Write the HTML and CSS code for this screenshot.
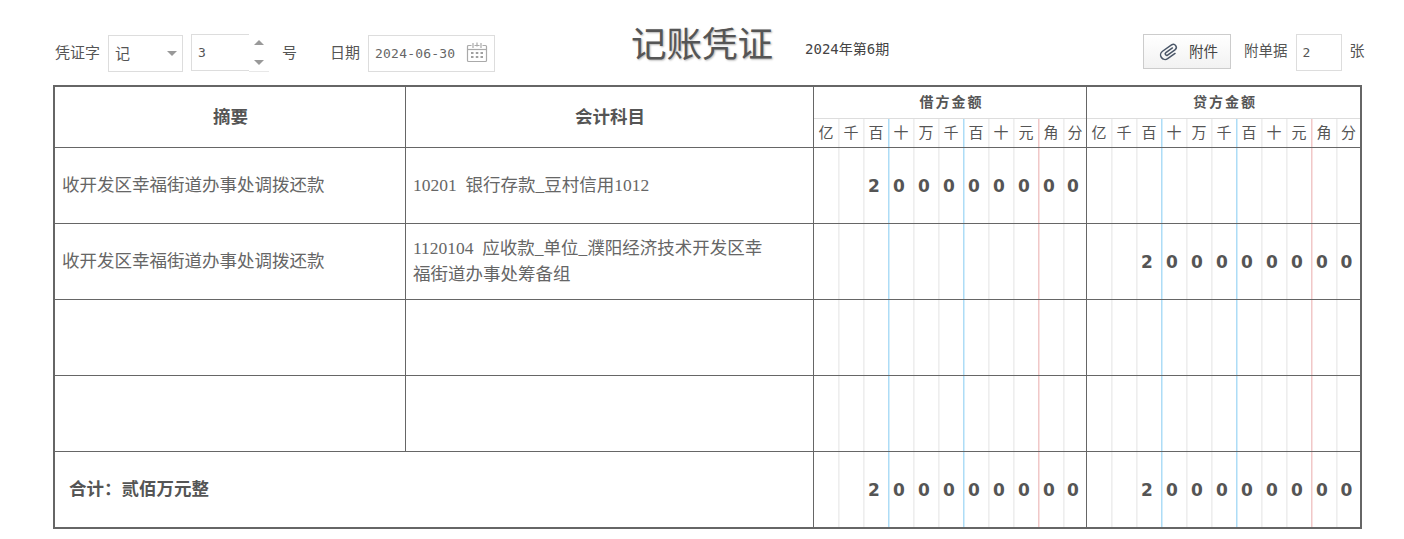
FILE: index.html
```html
<!DOCTYPE html>
<html lang="zh-CN">
<head>
<meta charset="utf-8">
<title>记账凭证</title>
<link rel="stylesheet" href="styles.css">
</head>
<body>
<header class="toolbar">
  <div class="group">
    <span class="lbl">凭证字</span>
    <div class="box select"><span>记</span><i class="caret"></i></div>
    <div class="box number"><span>3</span>
      <div class="spin"><i class="up"></i><i class="down"></i></div>
    </div>
    <span class="lbl hao">号</span>
    <span class="lbl date-lbl">日期</span>
    <div class="box date"><span>2024-06-30</span>
      <svg class="cal" width="22" height="22" viewBox="0 0 22 22" fill="none" stroke="#aaa" stroke-width="1.200">
        <path d="M5.500 4.500H2.500a1 1 0 0 0-1 1V19.500a1 1 0 0 0 1 1h17a1 1 0 0 0 1-1V5.500a1 1 0 0 0-1-1H16.500M8.500 4.500h5"/>
        <path d="M7 2v5M15 2v5M11 1.500v4"/>
        <path d="M1.500 8.500h19"/>
        <path fill="#a0a0a0" stroke="none" d="M5 11h2.500v2H5zM9.800 11h2.500v2H9.800zM14.500 11H17v2h-2.500zM5 15h2.500v2H5zM9.800 15h2.500v2H9.800zM14.500 15H17v2h-2.500z"/>
      </svg>
    </div>
  </div>
  <h1 class="title">记账凭证</h1>
  <span class="period">2024年第6期</span>
  <div class="group right">
    <button class="attach" type="button">
      <svg width="22" height="19" viewBox="0 0 22 19" fill="none" stroke="#4a5668" stroke-width="1.500" stroke-linecap="round">
        <path transform="translate(0 2) rotate(-35 11 7.500)" d="M14 12H5A4.500 4.500 0 0 1 5 3H16A3 3 0 0 1 16 9H7A1.500 1.500 0 0 1 7 6H15"/>
      </svg>
      <span class="attach-text">附件</span>
    </button>
    <span class="lbl att-lbl">附单据</span>
    <div class="box count"><span>2</span></div>
    <span class="lbl zhang">张</span>
  </div>
</header>

<main class="voucher">
  <div class="row head">
    <div class="cell th">摘要</div>
    <div class="cell th">会计科目</div>
    <div class="cell amount-head">
      <div class="amount-title">借方金额</div>
      <div class="digits units"><span>亿</span><span>千</span><span>百</span><span>十</span><span>万</span><span>千</span><span>百</span><span>十</span><span>元</span><span>角</span><span>分</span></div>
    </div>
    <div class="cell amount-head">
      <div class="amount-title">贷方金额</div>
      <div class="digits units"><span>亿</span><span>千</span><span>百</span><span>十</span><span>万</span><span>千</span><span>百</span><span>十</span><span>元</span><span>角</span><span>分</span></div>
    </div>
  </div>

  <div class="row">
    <div class="cell text">收开发区幸福街道办事处调拨还款</div>
    <div class="cell text">10201&nbsp;&nbsp;银行存款_豆村信用1012</div>
    <div class="cell"><div class="digits vals"><span></span><span></span><span>2</span><span>0</span><span>0</span><span>0</span><span>0</span><span>0</span><span>0</span><span>0</span><span>0</span></div></div>
    <div class="cell"><div class="digits vals"><span></span><span></span><span></span><span></span><span></span><span></span><span></span><span></span><span></span><span></span><span></span></div></div>
  </div>

  <div class="row">
    <div class="cell text">收开发区幸福街道办事处调拨还款</div>
    <div class="cell text">1120104&nbsp;&nbsp;应收款_单位_濮阳经济技术开发区幸福街道办事处筹备组</div>
    <div class="cell"><div class="digits vals"><span></span><span></span><span></span><span></span><span></span><span></span><span></span><span></span><span></span><span></span><span></span></div></div>
    <div class="cell"><div class="digits vals"><span></span><span></span><span>2</span><span>0</span><span>0</span><span>0</span><span>0</span><span>0</span><span>0</span><span>0</span><span>0</span></div></div>
  </div>

  <div class="row">
    <div class="cell text"></div>
    <div class="cell text"></div>
    <div class="cell"><div class="digits vals"><span></span><span></span><span></span><span></span><span></span><span></span><span></span><span></span><span></span><span></span><span></span></div></div>
    <div class="cell"><div class="digits vals"><span></span><span></span><span></span><span></span><span></span><span></span><span></span><span></span><span></span><span></span><span></span></div></div>
  </div>

  <div class="row">
    <div class="cell text"></div>
    <div class="cell text"></div>
    <div class="cell"><div class="digits vals"><span></span><span></span><span></span><span></span><span></span><span></span><span></span><span></span><span></span><span></span><span></span></div></div>
    <div class="cell"><div class="digits vals"><span></span><span></span><span></span><span></span><span></span><span></span><span></span><span></span><span></span><span></span><span></span></div></div>
  </div>

  <div class="row total">
    <div class="cell sum">合计：贰佰万元整</div>
    <div class="cell"><div class="digits vals"><span></span><span></span><span>2</span><span>0</span><span>0</span><span>0</span><span>0</span><span>0</span><span>0</span><span>0</span><span>0</span></div></div>
    <div class="cell"><div class="digits vals"><span></span><span></span><span>2</span><span>0</span><span>0</span><span>0</span><span>0</span><span>0</span><span>0</span><span>0</span><span>0</span></div></div>
  </div>
</main>
</body>
</html>
```
FILE: styles.css
```css
* { box-sizing: border-box; }
html, body { margin: 0; padding: 0; background: #fff; }
body {
  width: 1404px;
  height: 539px;
  overflow: hidden;
  color: #555;
  font-family: "Noto Sans CJK SC", "Liberation Sans", sans-serif;
  font-size: 15px;
}

/* toolbar */
.toolbar {
  display: flex;
  align-items: flex-start;
  height: 85px;
  padding: 24px 0 0 55px;
}
.group {
  display: flex;
  align-items: center;
  height: 38px;
  margin-top: 10px;
}
.lbl { line-height: 20px; white-space: nowrap; margin-bottom: 3px; }
.box {
  display: flex;
  align-items: center;
  height: 37px;
  border: 1px solid #ddd;
  background: #fff;
  padding-left: 6px;
  position: relative;
  color: #555;
}
.select { width: 75px; margin: 1px 0 0 8px; padding-bottom: 3px; font-size: 15px; }
.caret {
  position: absolute;
  right: 5px;
  top: 15px;
  width: 0;
  height: 0;
  border-left: 5px solid transparent;
  border-right: 5px solid transparent;
  border-top: 5px solid #999;
}
.number {
  width: 78px;
  margin: 0 0 1px 8px;
  font-family: "DejaVu Sans Mono", monospace;
  font-size: 13px;
}
.spin {
  position: absolute;
  right: -1px;
  top: -1px;
  width: 20px;
  height: 38px;
  border-bottom: 1px solid #e8e8e8;
  background: #fff;
}
.spin i {
  position: absolute;
  left: 5px;
  width: 0;
  height: 0;
  border-left: 5px solid transparent;
  border-right: 5px solid transparent;
}
.spin .up { top: 6px; border-bottom: 5px solid #999; }
.spin .down { top: 26px; border-top: 5px solid #999; }
.hao { margin-left: 13px; }
.date-lbl { margin-left: 33px; }
.date {
  width: 127px;
  margin: 1px 0 0 8px;
  font-family: "DejaVu Sans Mono", monospace;
  font-size: 13px;
  letter-spacing: .2px;
  color: #666;
}
.cal { position: absolute; right: 6px; top: 5px; }

.title {
  margin: 0 0 0 136px;
  font-size: 35.500px;
  line-height: 36px;
  font-weight: 400;
  color: #555;
  text-shadow: 1px 1px 2px rgba(0, 0, 0, .3);
  white-space: nowrap;
}
.period {
  margin: 16px 0 0 32px;
  font-family: "DejaVu Sans Mono", "Noto Sans CJK SC", monospace;
  font-size: 14px;
  line-height: 18px;
  color: #444;
  white-space: nowrap;
}
.right { margin-left: auto; width: 222px; margin-right: 39px; }
.attach {
  display: flex;
  align-items: center;
  gap: 8px;
  width: 88px;
  height: 35px;
  margin-bottom: 3px;
  padding: 0 0 0 15px;
  border: 1px solid #ccc;
  background: linear-gradient(#fff, #f2f2f2);
  color: #444;
  font: inherit;
  font-size: 14.500px;
}
.attach-text { margin-bottom: 2px; }
.att-lbl { margin: 0 8px 6px 13px; font-size: 14.500px; }
.count {
  width: 46px;
  margin-bottom: 1px;
  font-family: "DejaVu Sans Mono", monospace;
  font-size: 13px;
}
.zhang { margin: 0 0 6px 8px; }

/* voucher */
.voucher {
  width: 1309px;
  margin-left: 53px;
  border: 2px solid #666;
}
.row {
  display: grid;
  grid-template-columns: 351px 408px 273px 273px;
  height: 76px;
  border-bottom: 1px solid #666;
}
.row.head { height: 61px; }
.row.total {
  height: 75px;
  border-bottom: 0;
  grid-template-columns: 759px 273px 273px;
}
.row > .cell:last-child { border-right: 0; }
.cell {
  display: flex;
  align-items: center;
  border-right: 1px solid #666;
  min-width: 0;
}
.th {
  justify-content: center;
  padding: 0 0 3px 1px;
  font-size: 17.500px;
  font-weight: 700;
  color: #555;
}
.amount-head { display: block; }
.amount-title {
  height: 32px;
  border-bottom: 1px solid #ddd;
  padding-left: 3px;
  text-align: center;
  font-size: 14px;
  font-weight: 700;
  line-height: 29px;
  letter-spacing: 2px;
  color: #555;
}
.text {
  padding: 0 40px 2px 7px;
  font-size: 17.500px;
  line-height: 26px;
  color: #666;
  font-family: "Liberation Serif", "Noto Sans CJK SC", serif;
}
.sum {
  padding: 0 0 4px 14px;
  font-size: 17.500px;
  font-weight: 700;
  color: #555;
  font-family: "Liberation Serif", "Noto Sans CJK SC", serif;
}

/* digit columns */
.digits {
  display: grid;
  grid-template-columns: repeat(10, 25px) 1fr;
  width: 100%;
  height: 100%;
}
.digits span {
  display: flex;
  align-items: center;
  justify-content: center;
  border-right: 1px solid #eee;
  box-shadow: 1px 0 0 #f4f4f4;
}
.digits span:last-child { border-right: 0; box-shadow: none; }
.digits span:nth-child(3),
.digits span:nth-child(6) { border-right-color: #aedcf6; box-shadow: 1px 0 0 #d4eefb; }
.digits span:nth-child(9) { border-right-color: #f0c8c8; box-shadow: 1px 0 0 #f9e2e2; }
.units { height: 28px; }
.units span { padding-bottom: 2px; font-size: 15px; line-height: 26px; color: #555; }
.vals span {
  padding-right: 4px;
  font-family: "DejaVu Sans", sans-serif;
  font-size: 17px;
  font-weight: 700;
  color: #555;
}
```
